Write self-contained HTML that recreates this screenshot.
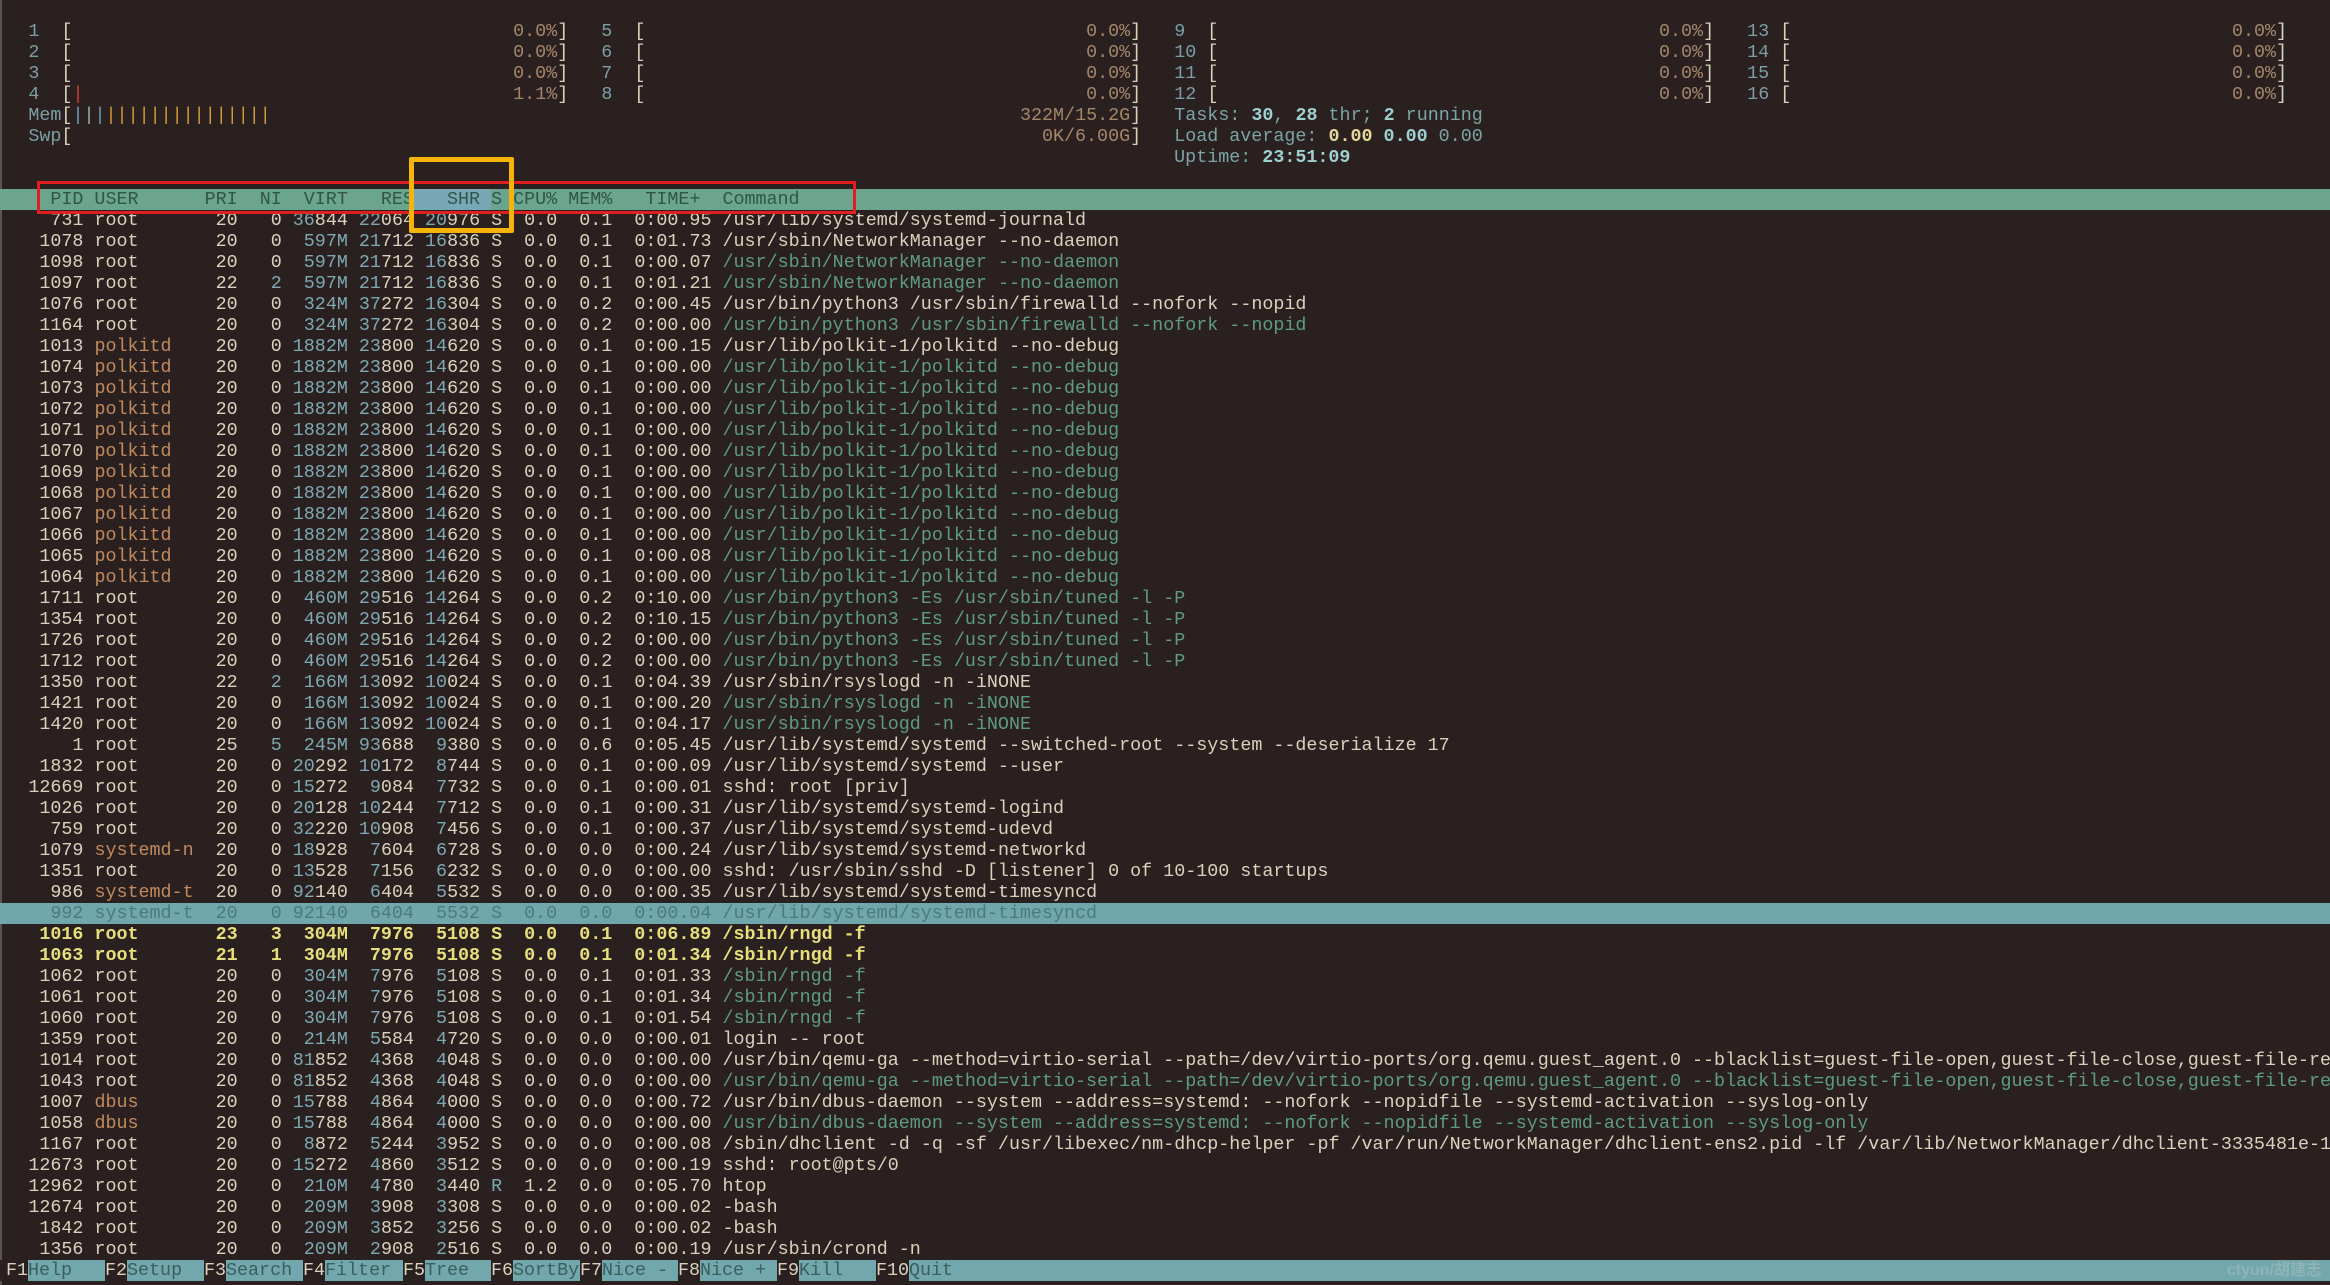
<!DOCTYPE html>
<html><head><meta charset="utf-8"><style>
html,body{margin:0;padding:0;}
body{width:2330px;height:1285px;overflow:hidden;background:#2a201f;position:relative;font-family:"Liberation Mono",monospace;font-size:18.38px;color:#d8d2bc;}
#t{position:absolute;left:0;top:21px;width:2330px;}
.l{height:21px;line-height:21px;white-space:pre;padding-left:6.3px;overflow:hidden;}
.c{color:#7ea8b2}.u{color:#c08a5e}.g{color:#5f9a85}.n{color:#7c9ea6}.p{color:#a4876a}
.y{color:#e6df7c;font-weight:bold}
.hd{background:#6ba58d;color:#2f5648}
.hs{background:#78a8b6}
.hl{background:#6fa7ad;color:#4b7a7e}
.tl{color:#7ca3a6}.tv{color:#9fd0d0;font-weight:bold}.ty{color:#e6d89a;font-weight:bold}
.b1{color:#6c9ec0}.b2{color:#9ab0a8}.bo{color:#d39a3a}.br{color:#d04030}
#lb{position:absolute;left:0;top:0;width:2px;height:1285px;background:#5a5555}
#ft{position:absolute;left:0;top:1260px;width:2330px;height:21px;background:#72a8ad;line-height:21px;}
#ft span{position:absolute;top:0;height:21px;white-space:pre;}
.k{background:#2a201f;color:#d8d2bc}
.fl{color:#3b5e5f}
#red{position:absolute;left:37px;top:181px;width:813px;height:27px;border:3px solid #e02020;}
#yel{position:absolute;left:409px;top:157px;width:95px;height:66px;border:5px solid #f6b40a;border-radius:2px;}
#wm{position:absolute;right:8px;top:1260px;line-height:21px;color:#8fb3b6;font-family:"Liberation Sans","Noto Sans CJK SC",sans-serif;font-size:16px;font-weight:bold}
</style></head><body>
<div id="lb"></div>
<div id="t">
<div class="l">  <span class="n">1</span>  [                                        <span class="p">0.0%</span>]   <span class="n">5</span>  [                                        <span class="p">0.0%</span>]   <span class="n">9</span>  [                                        <span class="p">0.0%</span>]   <span class="n">13</span> [                                        <span class="p">0.0%</span>]</div>
<div class="l">  <span class="n">2</span>  [                                        <span class="p">0.0%</span>]   <span class="n">6</span>  [                                        <span class="p">0.0%</span>]   <span class="n">10</span> [                                        <span class="p">0.0%</span>]   <span class="n">14</span> [                                        <span class="p">0.0%</span>]</div>
<div class="l">  <span class="n">3</span>  [                                        <span class="p">0.0%</span>]   <span class="n">7</span>  [                                        <span class="p">0.0%</span>]   <span class="n">11</span> [                                        <span class="p">0.0%</span>]   <span class="n">15</span> [                                        <span class="p">0.0%</span>]</div>
<div class="l">  <span class="n">4</span>  [<span class="br">|</span>                                       <span class="p">1.1%</span>]   <span class="n">8</span>  [                                        <span class="p">0.0%</span>]   <span class="n">12</span> [                                        <span class="p">0.0%</span>]   <span class="n">16</span> [                                        <span class="p">0.0%</span>]</div>
<div class="l">  <span class="n">Mem</span>[<span class="b1">|</span><span class="b2">|</span><span class="b1">|</span><span class="bo">|||||||||||||||</span>                                                                    <span class="p">322M/15.2G</span>]   <span class="tl">Tasks: </span><span class="tv">30</span><span class="tl">, </span><span class="tv">28</span><span class="tl"> thr; </span><span class="tv">2</span><span class="tl"> running</span></div>
<div class="l">  <span class="n">Swp</span>[                                                                                        <span class="p">0K/6.00G</span>]   <span class="tl">Load average: </span><span class="ty">0.00</span> <span class="tv">0.00</span> <span class="tl">0.00</span></div>
<div class="l">                                                                                                          <span class="tl">Uptime: </span><span class="tv">23:51:09</span></div>
<div class="l"> </div>
<div class="l hd">    PID USER      PRI  NI  VIRT   RES<span class="hs">   SHR </span>S CPU% MEM%   TIME+  Command</div>
<div class="l">    731 root       20   0 <span class="c">36</span>844 <span class="c">22</span>064 <span class="c">20</span>976 S  0.0  0.1  0:00.95 /usr/lib/systemd/systemd-journald</div>
<div class="l">   1078 root       20   0  <span class="c">597M</span> <span class="c">21</span>712 <span class="c">16</span>836 S  0.0  0.1  0:01.73 /usr/sbin/NetworkManager --no-daemon</div>
<div class="l">   1098 root       20   0  <span class="c">597M</span> <span class="c">21</span>712 <span class="c">16</span>836 S  0.0  0.1  0:00.07 <span class="g">/usr/sbin/NetworkManager --no-daemon</span></div>
<div class="l">   1097 root       22   <span class="c">2</span>  <span class="c">597M</span> <span class="c">21</span>712 <span class="c">16</span>836 S  0.0  0.1  0:01.21 <span class="g">/usr/sbin/NetworkManager --no-daemon</span></div>
<div class="l">   1076 root       20   0  <span class="c">324M</span> <span class="c">37</span>272 <span class="c">16</span>304 S  0.0  0.2  0:00.45 /usr/bin/python3 /usr/sbin/firewalld --nofork --nopid</div>
<div class="l">   1164 root       20   0  <span class="c">324M</span> <span class="c">37</span>272 <span class="c">16</span>304 S  0.0  0.2  0:00.00 <span class="g">/usr/bin/python3 /usr/sbin/firewalld --nofork --nopid</span></div>
<div class="l">   1013 <span class="u">polkitd</span>    20   0 <span class="c">1882M</span> <span class="c">23</span>800 <span class="c">14</span>620 S  0.0  0.1  0:00.15 /usr/lib/polkit-1/polkitd --no-debug</div>
<div class="l">   1074 <span class="u">polkitd</span>    20   0 <span class="c">1882M</span> <span class="c">23</span>800 <span class="c">14</span>620 S  0.0  0.1  0:00.00 <span class="g">/usr/lib/polkit-1/polkitd --no-debug</span></div>
<div class="l">   1073 <span class="u">polkitd</span>    20   0 <span class="c">1882M</span> <span class="c">23</span>800 <span class="c">14</span>620 S  0.0  0.1  0:00.00 <span class="g">/usr/lib/polkit-1/polkitd --no-debug</span></div>
<div class="l">   1072 <span class="u">polkitd</span>    20   0 <span class="c">1882M</span> <span class="c">23</span>800 <span class="c">14</span>620 S  0.0  0.1  0:00.00 <span class="g">/usr/lib/polkit-1/polkitd --no-debug</span></div>
<div class="l">   1071 <span class="u">polkitd</span>    20   0 <span class="c">1882M</span> <span class="c">23</span>800 <span class="c">14</span>620 S  0.0  0.1  0:00.00 <span class="g">/usr/lib/polkit-1/polkitd --no-debug</span></div>
<div class="l">   1070 <span class="u">polkitd</span>    20   0 <span class="c">1882M</span> <span class="c">23</span>800 <span class="c">14</span>620 S  0.0  0.1  0:00.00 <span class="g">/usr/lib/polkit-1/polkitd --no-debug</span></div>
<div class="l">   1069 <span class="u">polkitd</span>    20   0 <span class="c">1882M</span> <span class="c">23</span>800 <span class="c">14</span>620 S  0.0  0.1  0:00.00 <span class="g">/usr/lib/polkit-1/polkitd --no-debug</span></div>
<div class="l">   1068 <span class="u">polkitd</span>    20   0 <span class="c">1882M</span> <span class="c">23</span>800 <span class="c">14</span>620 S  0.0  0.1  0:00.00 <span class="g">/usr/lib/polkit-1/polkitd --no-debug</span></div>
<div class="l">   1067 <span class="u">polkitd</span>    20   0 <span class="c">1882M</span> <span class="c">23</span>800 <span class="c">14</span>620 S  0.0  0.1  0:00.00 <span class="g">/usr/lib/polkit-1/polkitd --no-debug</span></div>
<div class="l">   1066 <span class="u">polkitd</span>    20   0 <span class="c">1882M</span> <span class="c">23</span>800 <span class="c">14</span>620 S  0.0  0.1  0:00.00 <span class="g">/usr/lib/polkit-1/polkitd --no-debug</span></div>
<div class="l">   1065 <span class="u">polkitd</span>    20   0 <span class="c">1882M</span> <span class="c">23</span>800 <span class="c">14</span>620 S  0.0  0.1  0:00.08 <span class="g">/usr/lib/polkit-1/polkitd --no-debug</span></div>
<div class="l">   1064 <span class="u">polkitd</span>    20   0 <span class="c">1882M</span> <span class="c">23</span>800 <span class="c">14</span>620 S  0.0  0.1  0:00.00 <span class="g">/usr/lib/polkit-1/polkitd --no-debug</span></div>
<div class="l">   1711 root       20   0  <span class="c">460M</span> <span class="c">29</span>516 <span class="c">14</span>264 S  0.0  0.2  0:10.00 <span class="g">/usr/bin/python3 -Es /usr/sbin/tuned -l -P</span></div>
<div class="l">   1354 root       20   0  <span class="c">460M</span> <span class="c">29</span>516 <span class="c">14</span>264 S  0.0  0.2  0:10.15 <span class="g">/usr/bin/python3 -Es /usr/sbin/tuned -l -P</span></div>
<div class="l">   1726 root       20   0  <span class="c">460M</span> <span class="c">29</span>516 <span class="c">14</span>264 S  0.0  0.2  0:00.00 <span class="g">/usr/bin/python3 -Es /usr/sbin/tuned -l -P</span></div>
<div class="l">   1712 root       20   0  <span class="c">460M</span> <span class="c">29</span>516 <span class="c">14</span>264 S  0.0  0.2  0:00.00 <span class="g">/usr/bin/python3 -Es /usr/sbin/tuned -l -P</span></div>
<div class="l">   1350 root       22   <span class="c">2</span>  <span class="c">166M</span> <span class="c">13</span>092 <span class="c">10</span>024 S  0.0  0.1  0:04.39 /usr/sbin/rsyslogd -n -iNONE</div>
<div class="l">   1421 root       20   0  <span class="c">166M</span> <span class="c">13</span>092 <span class="c">10</span>024 S  0.0  0.1  0:00.20 <span class="g">/usr/sbin/rsyslogd -n -iNONE</span></div>
<div class="l">   1420 root       20   0  <span class="c">166M</span> <span class="c">13</span>092 <span class="c">10</span>024 S  0.0  0.1  0:04.17 <span class="g">/usr/sbin/rsyslogd -n -iNONE</span></div>
<div class="l">      1 root       25   <span class="c">5</span>  <span class="c">245M</span> <span class="c">93</span>688  <span class="c">9</span>380 S  0.0  0.6  0:05.45 /usr/lib/systemd/systemd --switched-root --system --deserialize 17</div>
<div class="l">   1832 root       20   0 <span class="c">20</span>292 <span class="c">10</span>172  <span class="c">8</span>744 S  0.0  0.1  0:00.09 /usr/lib/systemd/systemd --user</div>
<div class="l">  12669 root       20   0 <span class="c">15</span>272  <span class="c">9</span>084  <span class="c">7</span>732 S  0.0  0.1  0:00.01 sshd: root [priv]</div>
<div class="l">   1026 root       20   0 <span class="c">20</span>128 <span class="c">10</span>244  <span class="c">7</span>712 S  0.0  0.1  0:00.31 /usr/lib/systemd/systemd-logind</div>
<div class="l">    759 root       20   0 <span class="c">32</span>220 <span class="c">10</span>908  <span class="c">7</span>456 S  0.0  0.1  0:00.37 /usr/lib/systemd/systemd-udevd</div>
<div class="l">   1079 <span class="u">systemd-n</span>  20   0 <span class="c">18</span>928  <span class="c">7</span>604  <span class="c">6</span>728 S  0.0  0.0  0:00.24 /usr/lib/systemd/systemd-networkd</div>
<div class="l">   1351 root       20   0 <span class="c">13</span>528  <span class="c">7</span>156  <span class="c">6</span>232 S  0.0  0.0  0:00.00 sshd: /usr/sbin/sshd -D [listener] 0 of 10-100 startups</div>
<div class="l">    986 <span class="u">systemd-t</span>  20   0 <span class="c">92</span>140  <span class="c">6</span>404  <span class="c">5</span>532 S  0.0  0.0  0:00.35 /usr/lib/systemd/systemd-timesyncd</div>
<div class="l hl">    992 systemd-t  20   0 92140  6404  5532 S  0.0  0.0  0:00.04 /usr/lib/systemd/systemd-timesyncd</div>
<div class="l y">   1016 root       23   3  304M  7976  5108 S  0.0  0.1  0:06.89 /sbin/rngd -f</div>
<div class="l y">   1063 root       21   1  304M  7976  5108 S  0.0  0.1  0:01.34 /sbin/rngd -f</div>
<div class="l">   1062 root       20   0  <span class="c">304M</span>  <span class="c">7</span>976  <span class="c">5</span>108 S  0.0  0.1  0:01.33 <span class="g">/sbin/rngd -f</span></div>
<div class="l">   1061 root       20   0  <span class="c">304M</span>  <span class="c">7</span>976  <span class="c">5</span>108 S  0.0  0.1  0:01.34 <span class="g">/sbin/rngd -f</span></div>
<div class="l">   1060 root       20   0  <span class="c">304M</span>  <span class="c">7</span>976  <span class="c">5</span>108 S  0.0  0.1  0:01.54 <span class="g">/sbin/rngd -f</span></div>
<div class="l">   1359 root       20   0  <span class="c">214M</span>  <span class="c">5</span>584  <span class="c">4</span>720 S  0.0  0.0  0:00.01 login -- root</div>
<div class="l">   1014 root       20   0 <span class="c">81</span>852  <span class="c">4</span>368  <span class="c">4</span>048 S  0.0  0.0  0:00.00 /usr/bin/qemu-ga --method=virtio-serial --path=/dev/virtio-ports/org.qemu.guest_agent.0 --blacklist=guest-file-open,guest-file-close,guest-file-read,guest-file-write</div>
<div class="l">   1043 root       20   0 <span class="c">81</span>852  <span class="c">4</span>368  <span class="c">4</span>048 S  0.0  0.0  0:00.00 <span class="g">/usr/bin/qemu-ga --method=virtio-serial --path=/dev/virtio-ports/org.qemu.guest_agent.0 --blacklist=guest-file-open,guest-file-close,guest-file-read,guest-file-write</span></div>
<div class="l">   1007 <span class="u">dbus</span>       20   0 <span class="c">15</span>788  <span class="c">4</span>864  <span class="c">4</span>000 S  0.0  0.0  0:00.72 /usr/bin/dbus-daemon --system --address=systemd: --nofork --nopidfile --systemd-activation --syslog-only</div>
<div class="l">   1058 <span class="u">dbus</span>       20   0 <span class="c">15</span>788  <span class="c">4</span>864  <span class="c">4</span>000 S  0.0  0.0  0:00.00 <span class="g">/usr/bin/dbus-daemon --system --address=systemd: --nofork --nopidfile --systemd-activation --syslog-only</span></div>
<div class="l">   1167 root       20   0  <span class="c">8</span>872  <span class="c">5</span>244  <span class="c">3</span>952 S  0.0  0.0  0:00.08 /sbin/dhclient -d -q -sf /usr/libexec/nm-dhcp-helper -pf /var/run/NetworkManager/dhclient-ens2.pid -lf /var/lib/NetworkManager/dhclient-3335481e-1b2c</div>
<div class="l">  12673 root       20   0 <span class="c">15</span>272  <span class="c">4</span>860  <span class="c">3</span>512 S  0.0  0.0  0:00.19 sshd: root@pts/0</div>
<div class="l">  12962 root       20   0  <span class="c">210M</span>  <span class="c">4</span>780  <span class="c">3</span>440 <span class="c">R</span>  1.2  0.0  0:05.70 htop</div>
<div class="l">  12674 root       20   0  <span class="c">209M</span>  <span class="c">3</span>908  <span class="c">3</span>308 S  0.0  0.0  0:00.02 -bash</div>
<div class="l">   1842 root       20   0  <span class="c">209M</span>  <span class="c">3</span>852  <span class="c">3</span>256 S  0.0  0.0  0:00.02 -bash</div>
<div class="l">   1356 root       20   0  <span class="c">209M</span>  <span class="c">2</span>908  <span class="c">2</span>516 S  0.0  0.0  0:00.19 /usr/sbin/crond -n</div>
</div>
<div id="ft">
<span class="k" style="left:0;width:28px;padding-left:6px;box-sizing:border-box">F1</span><span class="fl" style="left:28px">Help</span>
<span class="k" style="left:105px;width:22px">F2</span><span class="fl" style="left:127px">Setup</span>
<span class="k" style="left:204px;width:22px">F3</span><span class="fl" style="left:226px">Search</span>
<span class="k" style="left:303px;width:22px">F4</span><span class="fl" style="left:325px">Filter</span>
<span class="k" style="left:403px;width:22px">F5</span><span class="fl" style="left:425px">Tree</span>
<span class="k" style="left:491px;width:22px">F6</span><span class="fl" style="left:513px">SortBy</span>
<span class="k" style="left:580px;width:22px">F7</span><span class="fl" style="left:602px">Nice -</span>
<span class="k" style="left:678px;width:22px">F8</span><span class="fl" style="left:700px">Nice +</span>
<span class="k" style="left:777px;width:22px">F9</span><span class="fl" style="left:799px">Kill</span>
<span class="k" style="left:876px;width:33px">F10</span><span class="fl" style="left:909px">Quit</span>
</div>
<div id="wm">ctyun/胡建志</div>
<div id="red"></div>
<div id="yel"></div>
</body></html>
